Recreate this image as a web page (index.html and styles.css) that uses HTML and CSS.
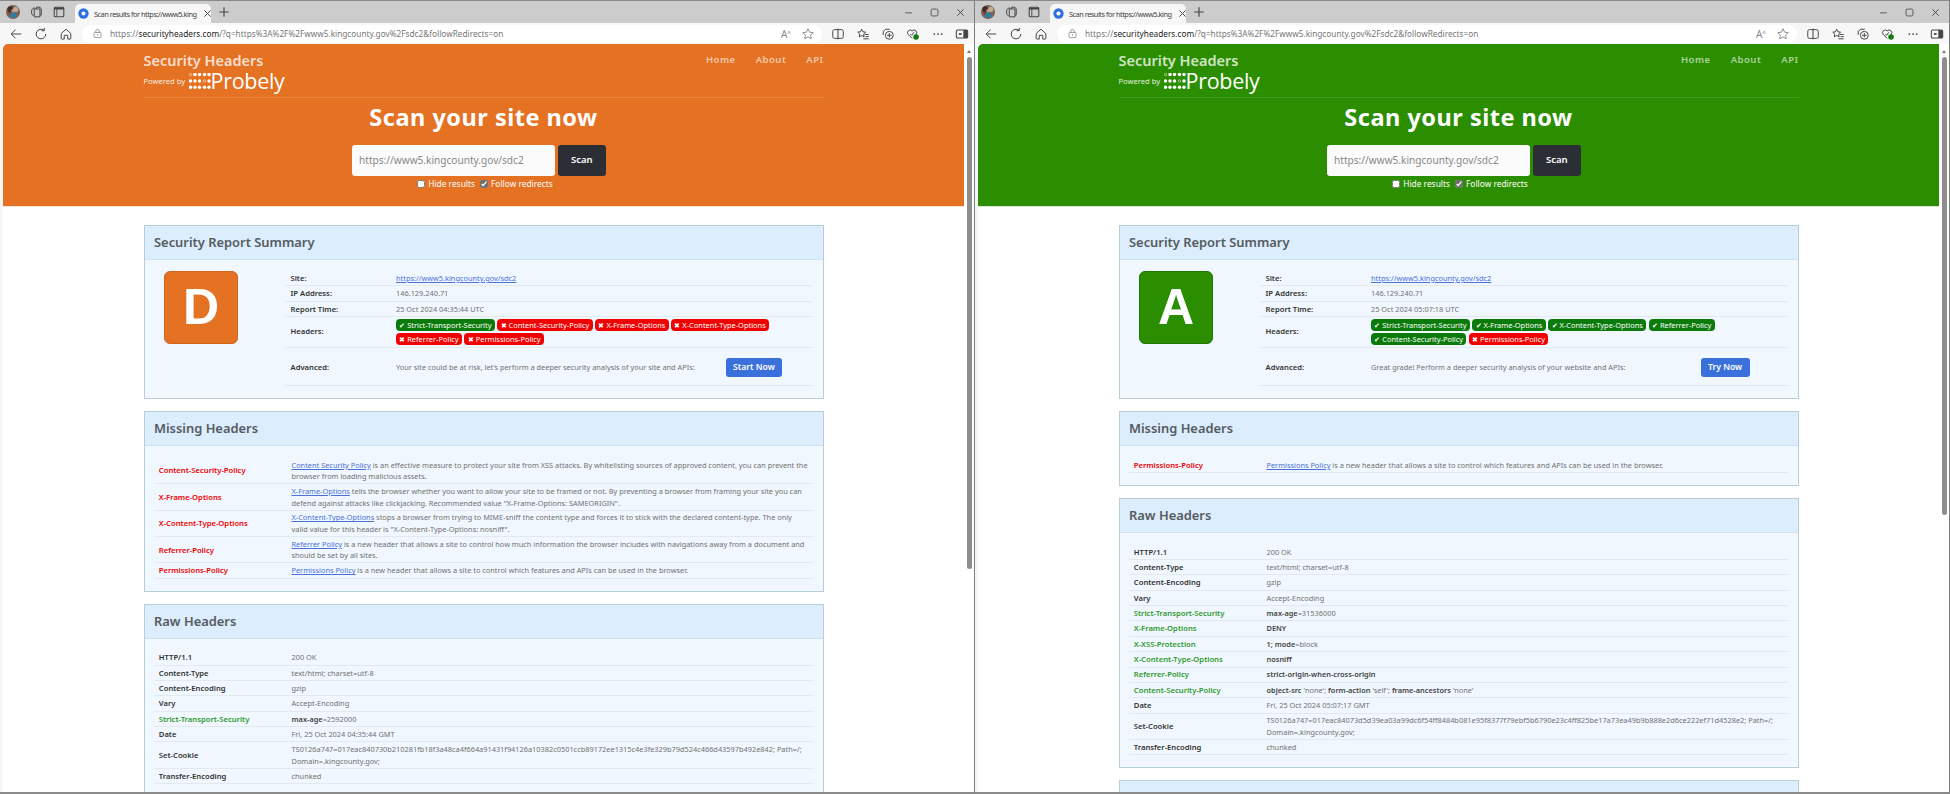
FILE: index.html
```html
<!DOCTYPE html>
<html lang="en">
<head>
<meta charset="UTF-8">
<title>Scan results for https://www5.kingcounty.gov/sdc2</title>
<link rel="stylesheet" href="styles.css">
</head>
<body>
<!-- shared browser icons -->
<svg class="icon-defs" width="0" height="0">
  <symbol id="i-collections" viewBox="0 0 16 16"><path d="M3 5.5 6 3l1.2 1.2M3 5.5V10l2 2.5M6 4.5h6.500v9H6z M8.500 4.500v-2h4l1.500 2v7h-1.500" fill="none" stroke="currentColor" stroke-width="1.1"/></symbol>
  <symbol id="i-vtabs" viewBox="0 0 16 16"><rect x="2.500" y="2.500" width="11" height="11" rx="1.500" fill="none" stroke="currentColor" stroke-width="1.2"/><path d="M2.500 3h11v2.200h-11z M5 5h1v8H5z" fill="currentColor"/></symbol>
  <symbol id="i-close" viewBox="0 0 16 16"><path d="M3.500 3.500l9 9M12.500 3.500l-9 9" fill="none" stroke="currentColor" stroke-width="1.4"/></symbol>
  <symbol id="i-plus" viewBox="0 0 16 16"><path d="M8 2.500v11M2.500 8h11" fill="none" stroke="currentColor" stroke-width="1.3"/></symbol>
  <symbol id="i-back" viewBox="0 0 16 16"><path d="M14 8H2.500M7.500 3l-5 5 5 5" fill="none" stroke="currentColor" stroke-width="1.1"/></symbol>
  <symbol id="i-refresh" viewBox="0 0 16 16"><path d="M13.500 8A5.500 5.500 0 1 1 11.500 3.800M11.800 1v3.200H8.600" fill="none" stroke="currentColor" stroke-width="1.1"/></symbol>
  <symbol id="i-home" viewBox="0 0 16 16"><path d="M2.500 7.500 8 2.500l5.500 5V13a.8.8 0 0 1-.8.8H10V9.500H6v4.300H3.300a.8.8 0 0 1-.8-.8z" fill="none" stroke="currentColor" stroke-width="1.1"/></symbol>
  <symbol id="i-lock" viewBox="0 0 16 16"><rect x="3" y="6.500" width="10" height="7.500" rx="1" fill="none" stroke="currentColor" stroke-width="1.2"/><path d="M5.500 6.500V4.500a2.500 2.500 0 0 1 5 0v2" fill="none" stroke="currentColor" stroke-width="1.2"/><circle cx="8" cy="10.200" r="1" fill="currentColor"/></symbol>
  <symbol id="i-star" viewBox="0 0 16 16"><path d="M8 2l1.800 3.900 4.200.5-3.100 2.900.8 4.200L8 11.400l-3.700 2.100.8-4.200L2 6.400l4.200-.5z" fill="none" stroke="currentColor" stroke-width="1.1"/></symbol>
  <symbol id="i-split" viewBox="0 0 16 16"><rect x="2" y="3" width="12" height="10" rx="2" fill="none" stroke="currentColor" stroke-width="1.1"/><path d="M8 2v12" stroke="currentColor" stroke-width="1.2"/></symbol>
  <symbol id="i-favs" viewBox="0 0 16 16"><path d="M6.500 2.500l1.400 3 3.100.4-2.300 2.200.6 3.200-2.800-1.600-2.800 1.600.6-3.200L2 5.900l3.100-.4zM10 8.500h4.500M11 11h3.500M8.500 13.500h6" fill="none" stroke="currentColor" stroke-width="1.1"/></symbol>
  <symbol id="i-addcol" viewBox="0 0 16 16"><path d="M2.500 9V5l3-2.500h4.500" fill="none" stroke="currentColor" stroke-width="1.1"/><circle cx="9.500" cy="9.500" r="4.500" fill="none" stroke="currentColor" stroke-width="1.1"/><path d="M9.500 7v5M7 9.500h5" stroke="currentColor" stroke-width="1.1"/></symbol>
  <symbol id="i-health" viewBox="0 0 16 16"><path d="M7 13 2.500 8.500a3 3 0 0 1 4.500-4 3 3 0 0 1 4.500 4L10 10M5 8l1.500 1.500L9 6" fill="none" stroke="currentColor" stroke-width="1.1"/><circle cx="11.500" cy="11.500" r="3.200" fill="#107c10"/></symbol>
  <symbol id="i-more" viewBox="0 0 16 16"><circle cx="3.800" cy="8" r="1" fill="currentColor"/><circle cx="8" cy="8" r="1" fill="currentColor"/><circle cx="12.200" cy="8" r="1" fill="currentColor"/></symbol>
  <symbol id="i-sidebar" viewBox="0 0 16 16"><rect x="1.500" y="3.500" width="13" height="9" rx="1.500" fill="none" stroke="currentColor" stroke-width="1.2"/><rect x="9.500" y="3.500" width="5" height="9" fill="currentColor"/><rect x="4.500" y="7" width="3" height="2" fill="currentColor"/></symbol>
  <symbol id="i-min" viewBox="0 0 16 16"><path d="M3 8.500h10" stroke="currentColor" stroke-width="1.2"/></symbol>
  <symbol id="i-max" viewBox="0 0 16 16"><rect x="3" y="3" width="10" height="10" rx="2" fill="none" stroke="currentColor" stroke-width="1.2"/></symbol>
  <symbol id="i-avatar" viewBox="0 0 16 16"><circle cx="8" cy="8" r="8" fill="#7a6454"/><circle cx="5" cy="5" r="3.500" fill="#3d2f2a"/><circle cx="11" cy="5" r="3" fill="#c2aa96"/><path d="M4 14c.5-4 2-6 4-6s4 2 4.500 6z" fill="#2c7f9f"/><circle cx="8" cy="6.500" r="2" fill="#c9967a"/><circle cx="4" cy="10" r="1.300" fill="#a5312b"/></symbol>
  <symbol id="i-favicon" viewBox="0 0 16 16"><circle cx="8" cy="8" r="7.500" fill="#2f6fe0"/><circle cx="8" cy="8" r="3" fill="#fff"/></symbol>
  <symbol id="i-probely" viewBox="0 0 44 32">
    <circle cx="3" cy="3" r="2.500" fill="none" stroke="currentColor" stroke-width="1"/><circle cx="12" cy="3" r="3.400"/><circle cx="21" cy="3" r="3.400"/><circle cx="31" cy="3" r="3.400"/><circle cx="40" cy="3" r="3.400"/>
    <circle cx="3" cy="16" r="3.400"/><circle cx="12" cy="16" r="3.400"/><circle cx="21" cy="16" r="3.400"/><circle cx="31" cy="16" r="2.500" fill="none" stroke="currentColor" stroke-width="1"/><circle cx="40" cy="16" r="3.400"/>
    <circle cx="3" cy="28.500" r="3.400"/><circle cx="12" cy="28.500" r="3.400"/><circle cx="21" cy="28.500" r="3.400"/><circle cx="31" cy="28.500" r="3.400"/><circle cx="40" cy="28.500" r="3.400"/>
  </symbol>
</svg>

<div class="screen">

  <!-- left window: grade D -->
  <div class="window grade-d">
    <div class="tabstrip">
      <span class="strip-btn"><svg class="ico-avatar"><use href="#i-avatar"/></svg></span>
      <span class="strip-btn"><svg class="ico"><use href="#i-collections"/></svg></span>
      <span class="strip-btn"><svg class="ico"><use href="#i-vtabs"/></svg></span>
      <div class="tab">
        <svg class="ico-fav"><use href="#i-favicon"/></svg>
        <span class="tab-title">Scan results for https://www5.king</span>
        <svg class="ico-small"><use href="#i-close"/></svg>
      </div>
      <span class="strip-btn new-tab"><svg class="ico"><use href="#i-plus"/></svg></span>
      <div class="win-controls">
        <svg class="ico-small"><use href="#i-min"/></svg>
        <svg class="ico-small"><use href="#i-max"/></svg>
        <svg class="ico-small"><use href="#i-close"/></svg>
      </div>
    </div>
    <div class="toolbar">
      <span class="tool-btn"><svg class="ico"><use href="#i-back"/></svg></span>
      <span class="tool-btn"><svg class="ico"><use href="#i-refresh"/></svg></span>
      <span class="tool-btn"><svg class="ico"><use href="#i-home"/></svg></span>
      <div class="address">
        <svg class="ico-small muted"><use href="#i-lock"/></svg>
        <span class="url">https://<b>securityheaders.com</b>/?q=https%3A%2F%2Fwww5.kingcounty.gov%2Fsdc2&amp;followRedirects=on</span>
        <span class="read-aloud">A<sup>ʌ</sup></span>
        <svg class="ico muted"><use href="#i-star"/></svg>
      </div>
      <span class="tool-btn"><svg class="ico"><use href="#i-split"/></svg></span>
      <span class="tool-btn"><svg class="ico"><use href="#i-favs"/></svg></span>
      <span class="tool-btn"><svg class="ico"><use href="#i-addcol"/></svg></span>
      <span class="tool-btn"><svg class="ico"><use href="#i-health"/></svg></span>
      <span class="tool-btn"><svg class="ico"><use href="#i-more"/></svg></span>
      <span class="tool-btn last"><svg class="ico"><use href="#i-sidebar"/></svg></span>
    </div>
    <div class="viewport">
      <div class="page">
        <div class="hero">
          <div class="wrap">
            <div class="topnav">
              <div class="brand">
                <div class="brand-title">Security Headers</div>
                <div class="powered">
                  <span>Powered by</span>
                  <svg class="probely-dots"><use href="#i-probely"/></svg>
                  <span class="probely-word">Probely</span>
                </div>
              </div>
              <div class="links"><span>Home</span><span>About</span><span>API</span></div>
            </div>
            <h1 class="scan-title">Scan your site now</h1>
            <div class="scan-form">
              <div class="scan-input">https://www5.kingcounty.gov/sdc2</div>
              <div class="scan-btn">Scan</div>
            </div>
            <div class="scan-opts">
              <label><input type="checkbox">Hide results</label>
              <label><input type="checkbox" checked>Follow redirects</label>
            </div>
          </div>
        </div>
        <div class="wrap reports">
          <section class="panel">
            <h2 class="panel-title">Security Report Summary</h2>
            <div class="panel-body summary">
              <div class="grade-box">D</div>
              <div class="info">
                <div class="row"><div class="key">Site:</div><div class="val"><a class="lnk">https://www5.kingcounty.gov/sdc2</a></div></div>
                <div class="row"><div class="key">IP Address:</div><div class="val">146.129.240.71</div></div>
                <div class="row"><div class="key">Report Time:</div><div class="val">25 Oct 2024 04:35:44 UTC</div></div>
                <div class="row headers-row"><div class="key">Headers:</div><div class="val pills">
                  <span class="pill ok">✔ Strict-Transport-Security</span>
                  <span class="pill bad">✖ Content-Security-Policy</span>
                  <span class="pill bad">✖ X-Frame-Options</span>
                  <span class="pill bad">✖ X-Content-Type-Options</span>
                  <span class="pill bad">✖ Referrer-Policy</span>
                  <span class="pill bad">✖ Permissions-Policy</span>
                </div></div>
                <div class="row adv-row"><div class="key">Advanced:</div><div class="val adv"><span class="adv-text">Your site could be at risk, let’s perform a deeper security analysis of your site and APIs:</span><span class="adv-btn">Start Now</span></div></div>
              </div>
            </div>
          </section>
          <section class="panel">
            <h2 class="panel-title">Missing Headers</h2>
            <div class="panel-body list">
              <div class="row tall"><div class="key red">Content-Security-Policy</div><div class="val"><a class="lnk">Content Security Policy</a> is an effective measure to protect your site from XSS attacks. By whitelisting sources of approved content, you can prevent the browser from loading malicious assets.</div></div>
              <div class="row tall"><div class="key red">X-Frame-Options</div><div class="val"><a class="lnk">X-Frame-Options</a> tells the browser whether you want to allow your site to be framed or not. By preventing a browser from framing your site you can defend against attacks like clickjacking. Recommended value "X-Frame-Options: SAMEORIGIN".</div></div>
              <div class="row tall"><div class="key red">X-Content-Type-Options</div><div class="val"><a class="lnk">X-Content-Type-Options</a> stops a browser from trying to MIME-sniff the content type and forces it to stick with the declared content-type. The only<br>valid value for this header is "X-Content-Type-Options: nosniff".</div></div>
              <div class="row tall"><div class="key red">Referrer-Policy</div><div class="val"><a class="lnk">Referrer Policy</a> is a new header that allows a site to control how much information the browser includes with navigations away from a document and should be set by all sites.</div></div>
              <div class="row"><div class="key red">Permissions-Policy</div><div class="val"><a class="lnk">Permissions Policy</a> is a new header that allows a site to control which features and APIs can be used in the browser.</div></div>
            </div>
          </section>
          <section class="panel">
            <h2 class="panel-title">Raw Headers</h2>
            <div class="panel-body list">
              <div class="row"><div class="key">HTTP/1.1</div><div class="val">200 OK</div></div>
              <div class="row"><div class="key">Content-Type</div><div class="val">text/html; charset=utf-8</div></div>
              <div class="row"><div class="key">Content-Encoding</div><div class="val">gzip</div></div>
              <div class="row"><div class="key">Vary</div><div class="val">Accept-Encoding</div></div>
              <div class="row"><div class="key green">Strict-Transport-Security</div><div class="val"><b>max-age</b>=2592000</div></div>
              <div class="row"><div class="key">Date</div><div class="val">Fri, 25 Oct 2024 04:35:44 GMT</div></div>
              <div class="row tall"><div class="key">Set-Cookie</div><div class="val">TS0126a747=017eac840730b210281fb18f3a48ca4f664a91431f94126a10382c0501ccb89172ee1315c4e3fe329b79d524c466d43597b492e842; Path=/; Domain=.kingcounty.gov;</div></div>
              <div class="row"><div class="key">Transfer-Encoding</div><div class="val">chunked</div></div>
            </div>
          </section>
        </div>
      </div>
      <div class="scrollbar"><span class="sb-up"></span><span class="sb-thumb"></span></div>
    </div>
  </div>

  <!-- right window: grade A -->
  <div class="window grade-a">
    <div class="tabstrip">
      <span class="strip-btn"><svg class="ico-avatar"><use href="#i-avatar"/></svg></span>
      <span class="strip-btn"><svg class="ico"><use href="#i-collections"/></svg></span>
      <span class="strip-btn"><svg class="ico"><use href="#i-vtabs"/></svg></span>
      <div class="tab">
        <svg class="ico-fav"><use href="#i-favicon"/></svg>
        <span class="tab-title">Scan results for https://www5.king</span>
        <svg class="ico-small"><use href="#i-close"/></svg>
      </div>
      <span class="strip-btn new-tab"><svg class="ico"><use href="#i-plus"/></svg></span>
      <div class="win-controls">
        <svg class="ico-small"><use href="#i-min"/></svg>
        <svg class="ico-small"><use href="#i-max"/></svg>
        <svg class="ico-small"><use href="#i-close"/></svg>
      </div>
    </div>
    <div class="toolbar">
      <span class="tool-btn"><svg class="ico"><use href="#i-back"/></svg></span>
      <span class="tool-btn"><svg class="ico"><use href="#i-refresh"/></svg></span>
      <span class="tool-btn"><svg class="ico"><use href="#i-home"/></svg></span>
      <div class="address">
        <svg class="ico-small muted"><use href="#i-lock"/></svg>
        <span class="url">https://<b>securityheaders.com</b>/?q=https%3A%2F%2Fwww5.kingcounty.gov%2Fsdc2&amp;followRedirects=on</span>
        <span class="read-aloud">A<sup>ʌ</sup></span>
        <svg class="ico muted"><use href="#i-star"/></svg>
      </div>
      <span class="tool-btn"><svg class="ico"><use href="#i-split"/></svg></span>
      <span class="tool-btn"><svg class="ico"><use href="#i-favs"/></svg></span>
      <span class="tool-btn"><svg class="ico"><use href="#i-addcol"/></svg></span>
      <span class="tool-btn"><svg class="ico"><use href="#i-health"/></svg></span>
      <span class="tool-btn"><svg class="ico"><use href="#i-more"/></svg></span>
      <span class="tool-btn last"><svg class="ico"><use href="#i-sidebar"/></svg></span>
    </div>
    <div class="viewport">
      <div class="page">
        <div class="hero">
          <div class="wrap">
            <div class="topnav">
              <div class="brand">
                <div class="brand-title">Security Headers</div>
                <div class="powered">
                  <span>Powered by</span>
                  <svg class="probely-dots"><use href="#i-probely"/></svg>
                  <span class="probely-word">Probely</span>
                </div>
              </div>
              <div class="links"><span>Home</span><span>About</span><span>API</span></div>
            </div>
            <h1 class="scan-title">Scan your site now</h1>
            <div class="scan-form">
              <div class="scan-input">https://www5.kingcounty.gov/sdc2</div>
              <div class="scan-btn">Scan</div>
            </div>
            <div class="scan-opts">
              <label><input type="checkbox">Hide results</label>
              <label><input type="checkbox" checked>Follow redirects</label>
            </div>
          </div>
        </div>
        <div class="wrap reports">
          <section class="panel">
            <h2 class="panel-title">Security Report Summary</h2>
            <div class="panel-body summary">
              <div class="grade-box">A</div>
              <div class="info">
                <div class="row"><div class="key">Site:</div><div class="val"><a class="lnk">https://www5.kingcounty.gov/sdc2</a></div></div>
                <div class="row"><div class="key">IP Address:</div><div class="val">146.129.240.71</div></div>
                <div class="row"><div class="key">Report Time:</div><div class="val">25 Oct 2024 05:07:18 UTC</div></div>
                <div class="row headers-row"><div class="key">Headers:</div><div class="val pills">
                  <span class="pill ok">✔ Strict-Transport-Security</span>
                  <span class="pill ok">✔ X-Frame-Options</span>
                  <span class="pill ok">✔ X-Content-Type-Options</span>
                  <span class="pill ok">✔ Referrer-Policy</span>
                  <span class="pill ok">✔ Content-Security-Policy</span>
                  <span class="pill bad">✖ Permissions-Policy</span>
                </div></div>
                <div class="row adv-row"><div class="key">Advanced:</div><div class="val adv"><span class="adv-text">Great grade! Perform a deeper security analysis of your website and APIs:</span><span class="adv-btn">Try Now</span></div></div>
              </div>
            </div>
          </section>
          <section class="panel">
            <h2 class="panel-title">Missing Headers</h2>
            <div class="panel-body list">
              <div class="row"><div class="key red">Permissions-Policy</div><div class="val"><a class="lnk">Permissions Policy</a> is a new header that allows a site to control which features and APIs can be used in the browser.</div></div>
            </div>
          </section>
          <section class="panel">
            <h2 class="panel-title">Raw Headers</h2>
            <div class="panel-body list">
              <div class="row"><div class="key">HTTP/1.1</div><div class="val">200 OK</div></div>
              <div class="row"><div class="key">Content-Type</div><div class="val">text/html; charset=utf-8</div></div>
              <div class="row"><div class="key">Content-Encoding</div><div class="val">gzip</div></div>
              <div class="row"><div class="key">Vary</div><div class="val">Accept-Encoding</div></div>
              <div class="row"><div class="key green">Strict-Transport-Security</div><div class="val"><b>max-age</b>=31536000</div></div>
              <div class="row"><div class="key green">X-Frame-Options</div><div class="val"><b>DENY</b></div></div>
              <div class="row"><div class="key green">X-XSS-Protection</div><div class="val"><b>1; mode</b>=block</div></div>
              <div class="row"><div class="key green">X-Content-Type-Options</div><div class="val"><b>nosniff</b></div></div>
              <div class="row"><div class="key green">Referrer-Policy</div><div class="val"><b>strict-origin-when-cross-origin</b></div></div>
              <div class="row"><div class="key green">Content-Security-Policy</div><div class="val"><b>object-src</b> 'none'; <b>form-action</b> 'self'; <b>frame-ancestors</b> 'none'</div></div>
              <div class="row"><div class="key">Date</div><div class="val">Fri, 25 Oct 2024 05:07:17 GMT</div></div>
              <div class="row tall"><div class="key">Set-Cookie</div><div class="val">TS0126a747=017eac84073d5d39ea03a99dc6f54ff8484b081e95f8377f79ebf5b6790e23c4ff825be17a73ea49b9b888e2d6ce222ef71d4528e2; Path=/; Domain=.kingcounty.gov;</div></div>
              <div class="row"><div class="key">Transfer-Encoding</div><div class="val">chunked</div></div>
            </div>
          </section>
          <section class="panel">
            <div class="panel-title"></div>
          </section>
        </div>
      </div>
      <div class="scrollbar"><span class="sb-up"></span><span class="sb-thumb"></span></div>
    </div>
  </div>

</div>
</body>
</html>
```
FILE: styles.css
```css
html, body {
  margin: 0;
  height: 100%;
  overflow: hidden;
  background: #fff;
  font-family: "Noto Sans", "Open Sans", sans-serif;
}

.icon-defs {
  position: absolute;
}

.screen {
  display: flex;
  height: 794px;
}

.window {
  width: 975px;
  height: 794px;
  box-sizing: border-box;
  flex-shrink: 0;
  display: flex;
  flex-direction: column;
  border-top: 1px solid #8a8a8a;
  border-right: 1px solid #7d7d7d;
  border-bottom: 2px solid #8a8a8a;
  color: #333;
}

.grade-d { --grade: #e57122; --grade-edge: #d0651c; }
.grade-a { --grade: #2a8e00; --grade-edge: #237700; }

/* browser chrome */
.tabstrip {
  display: flex;
  align-items: flex-end;
  height: 22px;
  padding-left: 1.5px;
  background: #cccccc;
  flex-shrink: 0;
}
.strip-btn {
  width: 23px;
  height: 22px;
  display: flex;
  align-items: center;
  justify-content: center;
}
.new-tab { margin-left: 1px; }

.ico { width: 14px; height: 14px; color: #444; }
.ico-small { width: 11px; height: 11px; color: #444; flex-shrink: 0; }
.ico-avatar { width: 14px; height: 14px; }
.ico-fav { width: 11px; height: 11px; flex-shrink: 0; }
.muted { color: #8a8a8a; }

.tab {
  display: flex;
  align-items: center;
  gap: 5px;
  width: 136px;
  height: 19px;
  box-sizing: border-box;
  margin-left: 4.5px;
  padding: 0 4px 0 3px;
  background: #f7f7f7;
  border-radius: 5px 5px 0 0;
}
.tab-title {
  flex: 1;
  font-size: 7.4px;
  letter-spacing: -0.5px;
  white-space: nowrap;
  color: #444;
}

.win-controls {
  margin-left: auto;
  display: flex;
  align-items: center;
  gap: 15px;
  height: 22px;
  padding-right: 8px;
}

.toolbar {
  display: flex;
  align-items: center;
  height: 21px;
  padding-left: 3.5px;
  background: #f7f7f7;
  flex-shrink: 0;
}
.tool-btn {
  width: 25px;
  display: flex;
  justify-content: center;
  flex-shrink: 0;
}
.tool-btn.last { width: 24px; }

.address {
  flex: 1;
  min-width: 0;
  display: flex;
  align-items: center;
  height: 18px;
  margin: 0 3.5px;
  padding: 0 7px 0 10px;
  background: #fff;
  border-radius: 9px;
}
.url {
  flex: 1;
  margin-left: 7px;
  font-size: 8.25px;
  color: #777;
  white-space: nowrap;
}
.url b { font-weight: 400; color: #222; }
.read-aloud {
  margin-right: 10px;
  font-size: 10px;
  color: #8a8a8a;
}
.read-aloud sup { font-size: 6px; }

.viewport {
  flex: 1;
  min-height: 0;
  display: flex;
  background: #f7f7f7;
}
.page {
  flex: 1;
  min-width: 0;
  margin-left: 3px;
  background: #fff;
  overflow: hidden;
  border-radius: 5px 0 0 0;
}

.scrollbar {
  width: 10px;
  flex-shrink: 0;
  display: flex;
  flex-direction: column;
  align-items: center;
  background: #fff;
}
.sb-up {
  margin-top: 6px;
  border: 2.5px solid transparent;
  border-top: 0;
  border-bottom: 3px solid #777;
}
.sb-thumb {
  width: 5px;
  height: 512px;
  margin-top: 4px;
  background: #8d8d8d;
  border-radius: 3px;
}
.grade-a .sb-thumb { height: 458px; }

/* scan hero */
.wrap {
  width: 680px;
  margin: 0 auto;
}
.hero {
  height: 162px;
  background: var(--grade);
  border-bottom: 1px solid #f3e4da;
  color: #fff;
}
.grade-a .hero { border-bottom-color: #dbe9d3; }

.topnav {
  display: flex;
  justify-content: space-between;
  height: 54px;
  box-sizing: border-box;
  border-bottom: 1px solid rgba(255, 255, 255, 0.12);
}
.brand-title {
  margin-top: 7px;
  font-size: 14.5px;
  line-height: 18px;
  font-weight: 600;
  color: rgba(255, 255, 255, 0.78);
}
.powered {
  display: flex;
  align-items: center;
  height: 24px;
  font-size: 7.6px;
  color: rgba(255, 255, 255, 0.9);
}
.probely-dots {
  width: 22px;
  height: 16px;
  margin-left: 3.5px;
  fill: #fff;
  color: #fff;
}
.probely-word {
  font-family: "Open Sans", sans-serif;
  font-weight: 400;
  font-size: 21.5px;
  line-height: 24px;
  letter-spacing: -0.3px;
  color: #fff;
}
.links {
  display: flex;
  gap: 20px;
  margin-top: 8px;
  font-size: 9.5px;
  line-height: 16px;
  font-weight: 600;
  letter-spacing: 0.5px;
  color: rgba(255, 255, 255, 0.62);
}

.scan-title {
  margin: 4px 0 0;
  text-align: center;
  font-size: 23.5px;
  line-height: 30px;
  font-weight: 700;
  letter-spacing: 0.5px;
  color: #fff;
}
.scan-form {
  display: flex;
  justify-content: center;
  gap: 2.5px;
  margin-top: 13px;
  padding-right: 9px;
  height: 30.5px;
}
.scan-input {
  width: 203px;
  box-sizing: border-box;
  padding-left: 7px;
  line-height: 30px;
  font-size: 10.1px;
  color: #888;
  background: #fbfbfb;
  border-radius: 3px;
}
.scan-btn {
  width: 48.5px;
  text-align: center;
  line-height: 30px;
  font-size: 9.5px;
  font-weight: 600;
  color: #fff;
  background: #2b2e35;
  border-radius: 3px;
}
.scan-opts {
  display: flex;
  justify-content: center;
  gap: 5px;
  margin-top: 1px;
  padding-left: 3px;
  font-size: 8.4px;
  line-height: 14px;
}
.scan-opts label {
  display: flex;
  align-items: center;
  gap: 3px;
}
.scan-opts input {
  width: 8px;
  height: 8px;
  margin: 0;
  accent-color: #6f6f6f;
}

/* report panels */
.reports {
  padding-top: 18px;
}
.panel {
  margin-bottom: 12px;
  background: #f0f7fe;
  border: 1px solid #b6cfd6;
}
.panel-title {
  margin: 0;
  height: 33px;
  padding-left: 9.5px;
  line-height: 33px;
  font-size: 12.9px;
  font-weight: 600;
  color: #555b60;
  background: #dcedfd;
  border-bottom: 1px solid #cfe0ee;
}
.panel-body {
  font-size: 7.38px;
  line-height: 11.4px;
  color: #727272;
}

.row {
  display: flex;
  align-items: center;
  box-sizing: border-box;
  height: 15.35px;
  padding-top: 1px;
  border-bottom: 1px solid #e2eaf0;
}
.row.tall { height: 26.4px; }
.key {
  flex-shrink: 0;
  font-size: 7.65px;
  font-weight: 600;
  color: #333;
}
.key.red { color: #f00000; }
.key.green { color: #2f9a2f; }
.val { flex: 1; min-width: 0; }
.val b { font-weight: 600; color: #444; }
.lnk {
  color: #4a71d8;
  text-decoration: underline;
}

.list {
  padding: 11.5px 9px 12px 9.5px;
}
.list .key {
  width: 137.5px;
  padding-left: 4.8px;
  box-sizing: border-box;
}

.summary {
  display: flex;
  padding: 10.5px 9.5px 12px 19.5px;
}
.grade-box {
  width: 74px;
  height: 73px;
  box-sizing: border-box;
  flex-shrink: 0;
  margin: 0 47px 0 0;
  text-align: center;
  font-family: "Liberation Sans", Arial, sans-serif;
  font-size: 50px;
  line-height: 71px;
  font-weight: 700;
  color: #fff;
  background: var(--grade);
  border: 1px solid var(--grade-edge);
  border-radius: 6px;
}
.info { flex: 1; min-width: 0; padding-top: 0.5px; }
.info .key {
  width: 111px;
  padding-left: 5.5px;
  box-sizing: border-box;
}
.headers-row { height: 31px; padding-top: 0; }
.adv-row { height: 38.4px; }

.pills {
  display: flex;
  flex-wrap: wrap;
  gap: 1.5px 2.5px;
}
.pill {
  height: 12px;
  padding: 0 3.3px;
  line-height: 12px;
  font-size: 7.45px;
  color: #fff;
  border-radius: 4px;
  white-space: nowrap;
}
.pill.ok { background: #0a7a0a; }
.pill.bad { background: #f00000; }

.adv {
  display: flex;
  align-items: center;
}
.adv-text { width: 329.5px; flex-shrink: 0; }
.adv-btn {
  padding: 0 7.5px;
  line-height: 19px;
  font-size: 8.6px;
  font-weight: 600;
  color: #fff;
  background: #3a70dc;
  border-radius: 3px;
}
```
